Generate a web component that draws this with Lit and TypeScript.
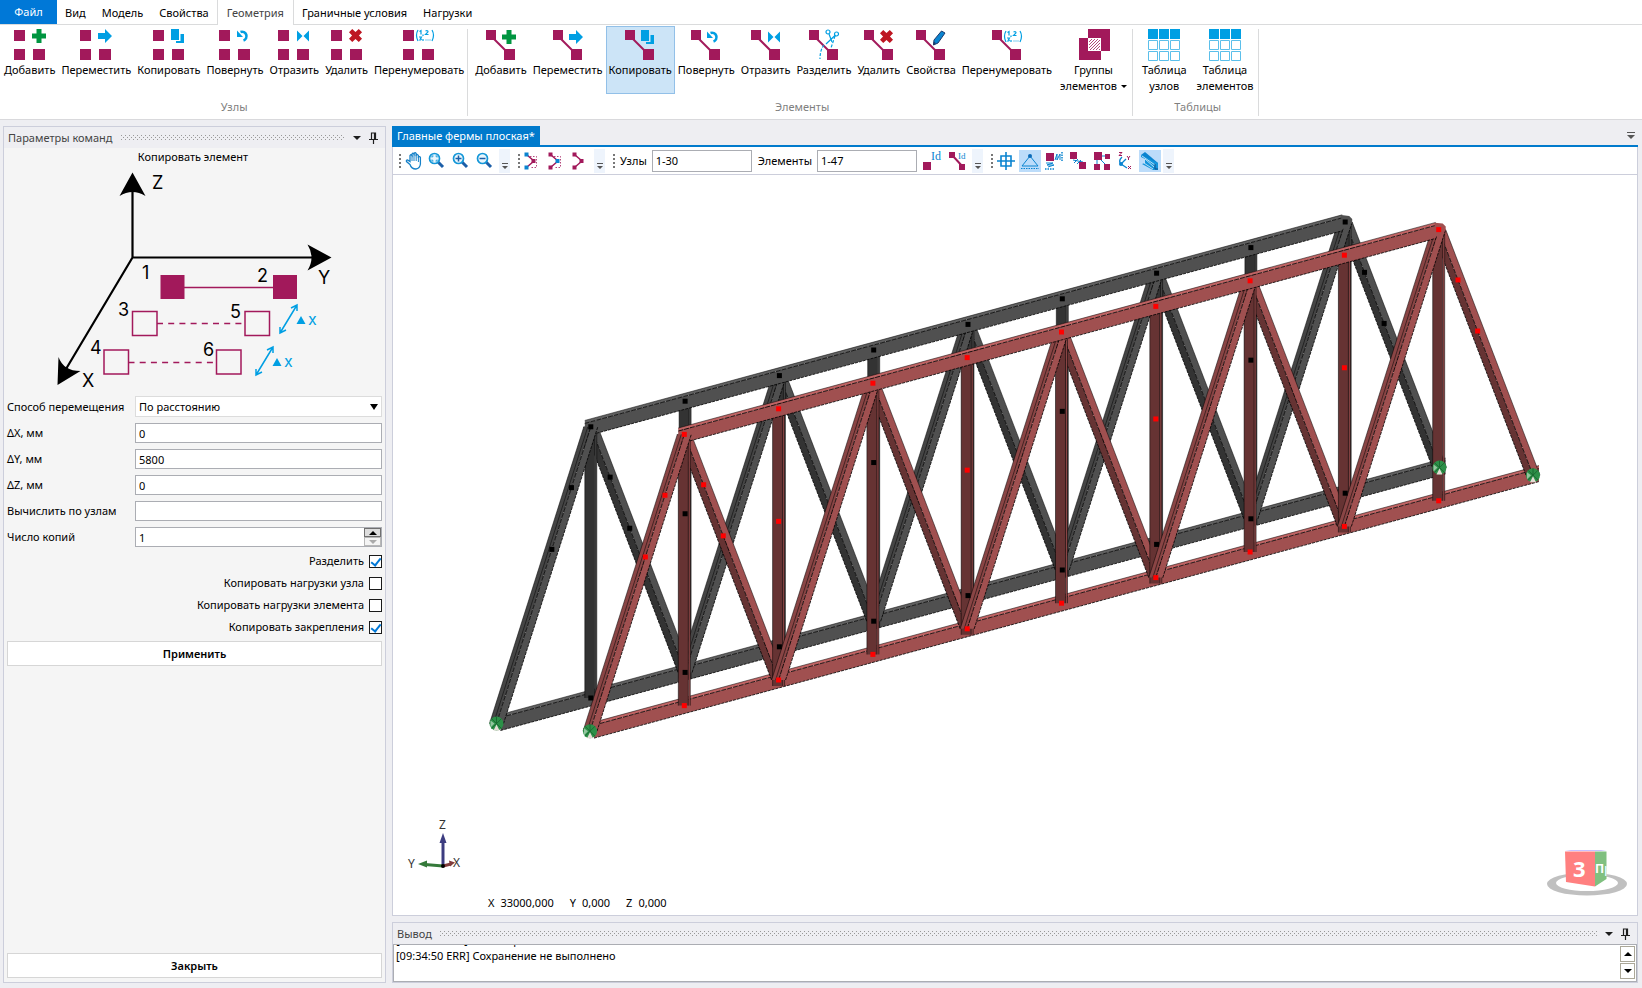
import { LitElement, html, svg, css } from "lit";
import { customElement } from "lit/decorators.js";
import { classMap } from "lit/directives/class-map.js";

const base = css`
  :host {
    font-family: "Noto Sans", "Open Sans", sans-serif;
    font-size: 11px;
    line-height: 16px;
    color: #000;
  }
  * {
    box-sizing: border-box;
  }
  button,
  input,
  select {
    font: inherit;
    color: inherit;
    margin: 0;
    border-radius: 0;
  }
  button {
    padding: 0;
    border: 0;
    background: none;
  }
  svg {
    display: block;
    flex: none;
  }
  .header {
    display: flex;
    align-items: center;
    height: 21px;
    padding: 0 7px 0 4px;
    gap: 8px;
    color: #444;
    background: #eeeef2;
  }
  .dots {
    flex: 1;
    height: 5px;
    background-image: radial-gradient(circle at 0.5px 0.5px, #999 0.6px, transparent 0.8px),
      radial-gradient(circle at 2.5px 2.5px, #999 0.6px, transparent 0.8px);
    background-size: 4px 4px;
  }
`;

const MAROON = "#a2195b";
const BLUE = "#009fe3";

/* ---------- ribbon glyphs ---------- */

const overlays: Record<string, unknown> = {
  add: svg`<path d="M4.500 0h5v4.500h4.500v5h-4.500v4.500h-5v-4.500h-4.500v-5h4.500z" fill="#009540"/>`,
  move: svg`<path d="M0 4h7v-4l7 7-7 7v-4h-7z" fill="${BLUE}"/>`,
  copy: svg`<path d="M0 0h8v11h-8zM9.500 5h3.500v9h-8v-2h4.500z" fill="${BLUE}"/>`,
  rotate: svg`<path d="M3.500 3A4.500 4.500 0 1 1 6.500 11.500" fill="none" stroke="${BLUE}" stroke-width="2.600"/><path d="M0 1.500v6.500h6z" fill="${BLUE}"/>`,
  mirror: svg`<path d="M1 1.500l5.500 5.500-5.500 5.500zM13 1.500v11l-5.500-5.500z" fill="${BLUE}"/>`,
  remove: svg`<path d="M3.500 0L7 3.300 10.500 0 14 3.500 10.700 7 14 10.500 10.500 14 7 10.700 3.500 14 0 10.500 3.300 7 0 3.500z" fill="#be1622" transform="scale(.93)"/>`,
  split: svg`<g fill="none" stroke="${BLUE}" stroke-width="1.200"><circle cx="3" cy="2" r="2"/><circle cx="11.500" cy="4" r="2"/><path d="M4 4l3 8M10 5.500L1 14"/><path d="M10 6l-4 12M-1 15q-4 5-4 14" stroke-dasharray="3 1.500"/></g>`,
  edit: svg`<path d="M9.500 1l3.500 2-7 10-4.500 2 .5-5z" fill="#0a84d0" stroke="#1d3a6b" stroke-width="1"/><path d="M1 15l.8-3.500 2.200 1.800z" fill="#1d3a6b"/>`,
  number: svg`<g fill="none" stroke="${BLUE}" stroke-width="1.200"><path d="M3 1Q0 6 3 12M17 1q3 5 0 11M4.500 2.500l1.500-1v4M8 5.500v1.500M10.500 2q2.500-1 2.500.8l-2.500 2.700h3M4 8h2.500l-1 1.500q2 1.500-1.500 1.500M8 10v2M10.500 11h1M12.500 11h1M14.500 11h1"/></g>`,
};

const nodeIcon = (kind: string) => svg`
  <g fill="${MAROON}">
    <path d="M0 1h11v11h-11zM0 20h11v11h-11zM19 20h12v11h-12z"/>
  </g>
  <g transform="translate(${kind === "number" ? 12 : 18} 0)">${overlays[kind]}</g>`;

const elementIcon = (kind: string) => svg`
  <path d="M7 8L25 26" stroke="${MAROON}" stroke-width="2"/>
  <g fill="${MAROON}"><path d="M1 1h10v10h-10zM19 20h11v11h-11z"/></g>
  <g transform="translate(${kind === "number" ? 12 : 17} 1)">${overlays[kind]}</g>`;

const groupIcon = svg`
  <path d="M10 0h22v22h-9v9h-22v-22h9z" fill="${MAROON}"/>
  <path d="M10 9h13v13h-13z" fill="#fff"/>
  <path d="M10 11l2-2M10 14l5-5M10 17l8-8M10 20l11-11M11 22l12-12M14 22l9-9M17 22l6-6M20 22l3-3" stroke="${MAROON}" stroke-width=".8"/>
  <path d="M10.500 9.500h12v12h-12z" fill="none" stroke="#fff"/>`;

const tableIcon = svg`
  <path d="M0 0h10v10h-10zM11 0h10v10h-10zM22 0h10v10h-10z" fill="${BLUE}"/>
  <path d="M.5 11.500h9v9h-9zM11.500 11.500h9v9h-9zM22.500 11.500h9v9h-9zM.5 22.500h9v9h-9zM11.500 22.500h9v9h-9zM22.500 22.500h9v9h-9z" fill="none" stroke="#5bbfea"/>`;

const ribbonGroups = [
  {
    title: "Узлы",
    items: [
      ["Добавить", nodeIcon("add")],
      ["Переместить", nodeIcon("move")],
      ["Копировать", nodeIcon("copy")],
      ["Повернуть", nodeIcon("rotate")],
      ["Отразить", nodeIcon("mirror")],
      ["Удалить", nodeIcon("remove")],
      ["Перенумеровать", nodeIcon("number")],
    ],
  },
  {
    title: "Элементы",
    items: [
      ["Добавить", elementIcon("add")],
      ["Переместить", elementIcon("move")],
      ["Копировать", elementIcon("copy"), "active"],
      ["Повернуть", elementIcon("rotate")],
      ["Отразить", elementIcon("mirror")],
      ["Разделить", elementIcon("split")],
      ["Удалить", elementIcon("remove")],
      ["Свойства", elementIcon("edit")],
      ["Перенумеровать", elementIcon("number")],
      ["Группы элементов", groupIcon, "menu"],
    ],
  },
  {
    title: "Таблицы",
    items: [
      ["Таблица узлов", tableIcon, "wrap"],
      ["Таблица элементов", tableIcon, "wrap"],
    ],
  },
] as { title: string; items: [string, unknown, string?][] }[];

@customElement("ribbon-bar")
class RibbonBar extends LitElement {
  static styles = [
    base,
    css`
      :host {
        display: block;
        background: #fff;
        border-bottom: 1px solid #d9d9dc;
      }
      .tabs {
        display: flex;
        height: 25px;
        border-bottom: 1px solid #dadbdc;
      }
      .tab {
        height: 24px;
        padding: 1px 8px 0;
        white-space: nowrap;
      }
      .file {
        width: 57px;
        color: #fff;
        background: #0078d7;
        padding: 0;
      }
      .current {
        height: 25px;
        padding: 0 9px;
        color: #444;
        background: #fff;
        border: solid #dadbdc;
        border-width: 0 1px;
      }
      .groups {
        display: flex;
        height: 94px;
        padding: 1px 0 3px;
      }
      .group {
        display: flex;
        flex-direction: column;
        position: relative;
        padding: 0 1px;
      }
      .group + .group {
        padding-left: 4px;
      }
      .group::after {
        content: "";
        position: absolute;
        right: 0;
        top: 3px;
        bottom: 0;
        width: 1px;
        background: #dadbdc;
      }
      .row {
        display: flex;
      }
      .cmd {
        display: flex;
        flex-direction: column;
        align-items: center;
        height: 68px;
        padding: 2px;
        border: 1px solid transparent;
        white-space: nowrap;
      }
      .icon {
        margin-bottom: 1px;
      }
      .active {
        background: #cce4f7;
        border-color: #92c0e8;
      }
      .menu,
      .wrap {
        padding: 2px 4px;
      }
      .line {
        display: flex;
        align-items: center;
        gap: 4px;
      }
      .caret {
        border: solid transparent;
        border-width: 3px 3px 0;
        border-top-color: #000;
      }
      .title {
        margin-top: 5px;
        text-align: center;
        color: #7f7f7f;
      }
    `,
  ];
  render() {
    const tabs = ["Вид", "Модель", "Свойства", "Геометрия", "Граничные условия", "Нагрузки"];
    return html`
      <nav class="tabs">
        <button class="tab file">Файл</button>
        ${tabs.map((t) => html`<button class=${classMap({ tab: true, current: t === "Геометрия" })}>${t}</button>`)}
      </nav>
      <div class="groups">
        ${ribbonGroups.map(
          (g) => html`<section class="group">
            <div class="row">
              ${g.items.map(([label, icon, mode]) => {
                const words = mode === "menu" || mode === "wrap" ? label.split(" ") : [label];
                return html`<button
                  class=${classMap({ cmd: true, active: mode === "active", menu: mode === "menu", wrap: mode === "wrap" })}
                >
                  <svg class="icon" width="32" height="32" viewBox="0 0 32 32">${icon}</svg>
                  ${words.map(
                    (w, i) =>
                      html`<span class="line">${w}${mode === "menu" && i === 1 ? html`<i class="caret"></i>` : ""}</span>`
                  )}
                </button>`;
              })}
            </div>
            <div class="title">${g.title}</div>
          </section>`
        )}
      </div>
    `;
  }
}

const headerTools = html`
  <svg width="8" height="4" viewBox="0 0 8 4"><path d="M0 0h8l-4 4z" fill="#1e1e1e" /></svg>
  <svg width="9" height="12" viewBox="0 0 9 12">
    <path d="M2.500 7V1h4v6M0 7.500h9M4.500 7.500V12M5.500 1v6" fill="none" stroke="#1e1e1e" stroke-width="1.200" />
  </svg>
`;

/* ---------- left panel ---------- */

@customElement("command-panel")
class CommandPanel extends LitElement {
  static styles = [
    base,
    css`
      :host {
        display: flex;
        flex-direction: column;
        background: #f5f5f5;
        border: 1px solid #ccceDB;
      }
      .body {
        flex: 1;
        display: flex;
        flex-direction: column;
        padding: 1px 3px 4px;
      }
      .name {
        text-align: center;
        padding-right: 3px;
      }
      .scheme {
        width: 100%;
        height: 231px;
      }
      .form {
        display: grid;
        grid-template-columns: 128px 1fr;
        row-gap: 6px;
        align-items: center;
      }
      .field {
        width: 100%;
        height: 20px;
        padding: 0 3px;
        border: 1px solid #abadb3;
        background: #fff;
        outline: none;
      }
      .pick {
        position: relative;
        display: flex;
      }
      .pick select {
        appearance: none;
        height: 21px;
        border-color: #dcdcdc;
      }
      .pick::after {
        content: "";
        position: absolute;
        right: 4px;
        top: 8px;
        border: solid transparent;
        border-width: 6px 4px 0;
        border-top-color: #000;
      }
      .spin {
        position: relative;
        display: flex;
      }
      .steps {
        position: absolute;
        right: 1px;
        top: 1px;
        display: grid;
        grid-template-rows: 9px 9px;
        width: 17px;
      }
      .step {
        display: grid;
        place-items: center;
        border: 1px solid #707070;
        background: #ddd;
      }
      .step.off {
        border-color: #b8b8b8;
        background: #f4f4f4;
      }
      .checks {
        display: flex;
        flex-direction: column;
        align-items: flex-end;
        gap: 6px;
        padding: 6px 0;
      }
      .check {
        display: flex;
        align-items: center;
        gap: 5px;
      }
      .box {
        appearance: none;
        position: relative;
        width: 13px;
        height: 13px;
        border: 1px solid #1a1a1a;
        background: #fff;
      }
      .box:checked::after {
        content: "";
        position: absolute;
        left: 3px;
        top: 0;
        width: 4px;
        height: 8px;
        border: solid #0078d7;
        border-width: 0 2px 2px 0;
        transform: rotate(38deg);
      }
      .wide {
        height: 25px;
        font-weight: 600;
        background: #fff;
        border: 1px solid #d6d6d6;
      }
      .space {
        flex: 1;
      }
    `,
  ];
  render() {
    const fields = [
      ["dx", "ΔX, мм", "0"],
      ["dy", "ΔY, мм", "5800"],
      ["dz", "ΔZ, мм", "0"],
      ["calc", "Вычислить по узлам", ""],
    ];
    const checks: [string, boolean][] = [
      ["Разделить", true],
      ["Копировать нагрузки узла", false],
      ["Копировать нагрузки элемента", false],
      ["Копировать закрепления", true],
    ];
    const link = (x: number, y: number) => svg`
      <g fill="none" stroke="${BLUE}" stroke-width="1.500">
        <path d="M${x} ${y}l-17 28M${x - 6} ${y + 3}l6-3 0 6M${x - 17} ${y + 22}l0 6 6-3"/>
      </g>
      <path d="M${x + 4} ${y + 11}l-4.500 8h9z" fill="${BLUE}"/>
      <text x="${x + 11}" y="${y + 20}" font-size="16" fill="${BLUE}">x</text>`;
    return html`
      <div class="header">Параметры команд<span class="dots"></span>${headerTools}</div>
      <div class="body">
        <div class="name">Копировать элемент</div>
        <svg class="scheme" viewBox="7 165 375 231" preserveAspectRatio="xMidYMid meet" font-family="Inter, sans-serif">
          <path d="M132.500 190V257.500H315M132.500 257.500L66 369" fill="none" stroke="#000" stroke-width="2.200" />
          <path d="M132.500 172.500l13 23.500q-13-8-26 0zM331.500 257.500l-24 13q8-13 0-26zM57.500 385l1-28q5 14 22 14z" />
          <g font-size="18">
            <text x="152" y="189">Z</text><text x="318" y="284">Y</text><text x="82" y="387">X</text>
            <text x="142" y="279">1</text><text x="257" y="282">2</text><text x="118" y="316">3</text>
            <text x="230" y="318">5</text><text x="90" y="354">4</text><text x="203" y="356">6</text>
          </g>
          <path d="M160.500 275h24v24h-24zM273 275h24v24h-24z" fill="${MAROON}" />
          <g fill="none" stroke="${MAROON}" stroke-width="1.500">
            <path d="M184 287.500h90M132.500 311.500h24.500v24h-24.500zM245 311.500h24.500v24h-24.500zM104 350h24.500v24h-24.500zM216.500 350h24.500v24h-24.500z" />
            <path d="M157 323.500h88M128.500 362.500h88" stroke-dasharray="6 5.200" />
          </g>
          ${link(297, 305)} ${link(273, 347)}
        </svg>
        <div class="form">
          <label for="mode">Способ перемещения</label>
          <span class="pick"><select id="mode" class="field"><option>По расстоянию</option></select></span>
          ${fields.map(
            ([id, label, value]) => html`<label for=${id}>${label}</label><input id=${id} class="field" .value=${value} />`
          )}
          <label for="count">Число копий</label>
          <span class="spin">
            <input id="count" class="field" value="1" />
            <span class="steps">
              <button class="step" aria-label="Больше">
                <svg width="8" height="4" viewBox="0 0 8 4"><path d="M0 4h8l-4-4z" /></svg>
              </button>
              <button class="step off" aria-label="Меньше">
                <svg width="8" height="4" viewBox="0 0 8 4"><path d="M0 0h8l-4 4z" fill="#aaa" /></svg>
              </button>
            </span>
          </span>
        </div>
        <div class="checks">
          ${checks.map(
            ([label, on]) => html`<label class="check">${label}<input class="box" type="checkbox" .checked=${on} /></label>`
          )}
        </div>
        <button class="wide">Применить</button>
        <div class="space"></div>
        <button class="wide">Закрыть</button>
      </div>
    `;
  }
}

/* ---------- truss drawing ---------- */

type Pt = [number, number];
interface Tone {
  light: string;
  mid: string;
  dark: string;
  top: string;
  node: string;
}

const PANEL: Pt = [94.3, -25.6];
const RISE = 271.2;
const RED: Tone = { light: "#a05050", mid: "#8a4545", dark: "#663333", top: "#c06464", node: "#ff0000" };
const GREY: Tone = { light: "#505050", mid: "#454545", dark: "#333333", top: "#606060", node: "#000000" };

const bottomAt = (o: Pt, i: number): Pt => [o[0] + PANEL[0] * i, o[1] + PANEL[1] * i];
const topAt = (o: Pt, i: number): Pt => [o[0] + PANEL[0] * i, o[1] + PANEL[1] * i - RISE];
const between = (a: Pt, b: Pt, k: number): Pt => [a[0] + (b[0] - a[0]) * k, a[1] + (b[1] - a[1]) * k];

const strip = (a: Pt, b: Pt, from: Pt, to: Pt, fill: string) => svg`
  <polygon fill=${fill} points="${a[0] + from[0]},${a[1] + from[1]} ${b[0] + from[0]},${b[1] + from[1]} ${b[0] + to[0]},${b[1] + to[1]} ${a[0] + to[0]},${a[1] + to[1]}"/>`;
const edge = (a: Pt, b: Pt, d: Pt, dash = "") => svg`
  <line x1=${a[0] + d[0]} y1=${a[1] + d[1]} x2=${b[0] + d[0]} y2=${b[1] + d[1]} stroke="#000" stroke-width="1" stroke-opacity=${dash ? 0.8 : 0.5} stroke-dasharray=${dash}/>`;
const cap = (p: Pt, d: string, fill: string) => svg`
  <path transform="translate(${p[0]} ${p[1]})" d=${d} fill=${fill}/>`;

function chord(a: Pt, b: Pt, t: Tone, before: number, after: number) {
  const slope = PANEL[1] / PANEL[0];
  const p: Pt = [a[0] - before, a[1] - before * slope];
  const q: Pt = [b[0] + after, b[1] + after * slope];
  return svg`${strip(p, q, [0, -8], [0, -5], t.top)}${strip(p, q, [0, -5], [0, 8], t.light)}
    ${edge(p, q, [0, -8])}${edge(p, q, [0, -5], "5 1")}${edge(p, q, [0, 8], "3 1")}`;
}
const rising = (a: Pt, b: Pt, t: Tone) => svg`
  ${strip(a, b, [-7, 0], [0, 0], t.mid)}${strip(a, b, [0, 0], [7, 0], t.light)}
  ${edge(a, b, [-7, 0])}${edge(a, b, [-3, 0])}${edge(a, b, [0, 0], "5 1")}${edge(a, b, [7, 0], "3 1")}`;
const falling = (a: Pt, b: Pt, t: Tone) => svg`
  ${strip(a, b, [-7, 0], [0, 0], t.dark)}${strip(a, b, [0, 0], [7, 0], t.light)}
  ${edge(a, b, [-7, 0], "3 1")}${edge(a, b, [0, 0], "5 1")}${edge(a, b, [7, 0])}`;
const post = (a: Pt, b: Pt, t: Tone) => svg`
  ${strip(a, b, [-6, 0], [4, 0], t.dark)}${strip(a, b, [4, 0], [6, 0], t.mid)}
  ${edge(a, b, [-6, 0])}${edge(a, b, [4, 0])}${edge(a, b, [6, 0])}`;

function truss(o: Pt, t: Tone) {
  const odd = [1, 3, 5, 7, 9];
  const all = [1, 2, 3, 4, 5, 6, 7, 8, 9];
  const down = ([x, y]: Pt): Pt => [x, y + 6];
  return svg`
    ${chord(bottomAt(o, 0), bottomAt(o, 10), t, -4, 6)}
    ${cap(o, "M-7 -3L7 -3L7 5.500L-3 5.500z", t.light)}
    ${odd.map((i) => falling(topAt(o, i), bottomAt(o, i + 1), t))}
    ${all.map((i) => post(topAt(o, i), i % 2 ? bottomAt(o, i) : down(bottomAt(o, i)), t))}
    ${odd.slice(1).map((i) => rising(bottomAt(o, i - 1), topAt(o, i), t))}
    ${chord(topAt(o, 1), topAt(o, 9), t, 6, -3)}
    ${cap(topAt(o, 9), "M-4 -6.900L4 -6L7 -3L7 1L0 6L-4 8z", t.light)}
    ${rising(o, topAt(o, 1), t)}`;
}

function nodes(o: Pt, t: Tone) {
  const pts: Pt[] = [];
  for (let i = 1; i < 10; i++) {
    pts.push(topAt(o, i), bottomAt(o, i));
    if (i % 2 === 0) pts.push(between(topAt(o, i), bottomAt(o, i), 0.415));
  }
  for (const k of [0.205, 0.413]) {
    pts.push(between(topAt(o, 1), bottomAt(o, 0), k));
    pts.push(between(topAt(o, 1), bottomAt(o, 2), k));
    pts.push(between(topAt(o, 9), bottomAt(o, 10), k));
  }
  return pts.map(([x, y]) => svg`<rect x=${x - 2.5} y=${y - 2.5} width="5" height="5" fill=${t.node}/>`);
}

const support = ([x, y]: Pt) => svg`
  <g transform="translate(${x} ${y})">
    <circle r="7" fill="#2c9048"/>
    <path d="M0 1L-3 7H3z" fill="#e6dcd6"/>
    <path d="M-6 -3l4 3-4 4z" fill="#d8ead8" opacity=".6"/>
    <path d="M-5 -5L5 5M5 -5L-5 5M0 -7V0" stroke="#17602c" stroke-width=".8"/>
  </g>`;

/* ---------- toolbar glyphs ---------- */

const lens = (inner: unknown) => svg`
  <g transform="translate(-1 0)">
    <path d="M10 10l5 5" stroke="#1c5fa8" stroke-width="3"/>
    <circle cx="6.500" cy="6.500" r="5" fill="#e9f6fd" stroke="#1497d8" stroke-width="1.700"/>${inner}
  </g>`;
const chain = (a: string, b: string) => svg`
  <path d="M3 3l7 6-7 6" fill="none" stroke="${MAROON}" stroke-width="1.500"/>
  <path d="M.5.5h4v4h-4zM.5 13.500h4v4h-4z" fill="${a}"/><path d="M7.500 7h4v4h-4z" fill="${b}"/>`;
const frame = svg`<path d="M6 4.500h6.500v11h-6.500" fill="none" stroke="${MAROON}" stroke-width=".8" stroke-dasharray="1.500 1.500"/>`;

const glyphs: Record<string, unknown> = {
  hand: svg`<path d="M5 12.500L1.500 9.500q-.5-1.500 1-1.500l2.500 1.500V3.500q1-1.500 2 0V2q1-1.500 2 0V1.500q1.200-1.500 2.200 0V3q1.300-1.200 2.200.5V5q1.200-.8 2 .5V12q-.5 4.500-4.500 5-4.500 0-5.900-4.500z" fill="#fff" stroke="#1681c8" stroke-width="1.300"/><path d="M7 3v6M9 2v7M11.200 2.500V9M13.400 4.500V10" stroke="#1681c8"/>`,
  fit: lens(svg`<path d="M4 5.500V4h1.500M7.500 4H9v1.500M9 7.500V9H7.500M5.500 9H4V7.500" fill="none" stroke="#1497d8"/>`),
  plus: lens(svg`<path d="M3.500 6.500h6M6.500 3.500v6" stroke="#1c5fa8" stroke-width="1.500"/>`),
  minus: lens(svg`<path d="M3.500 6.500h6" stroke="#1c5fa8" stroke-width="1.500"/>`),
  sel1: svg`${frame}${chain("#0a84d0", MAROON)}`,
  sel2: svg`${frame}${chain(MAROON, "#0a84d0")}`,
  sel3: chain(MAROON, MAROON),
  id1: svg`<path d="M0 10h8v8h-8z" fill="${MAROON}"/><text x="8" y="8" font-size="12" font-family="Liberation Serif, serif" fill="#0a84d0">Id</text>`,
  id2: svg`<path d="M3 3l11 12" stroke="${MAROON}" stroke-width="2"/><path d="M0 0h6v6h-6zM10 12h6v6h-6z" fill="${MAROON}"/><text x="9" y="7" font-size="9" font-family="Liberation Serif, serif" fill="#0a84d0">Id</text>`,
  target: svg`<path d="M9 0v18M0 9h18M4 4h10v10h-10z" fill="none" stroke="#0a84d0" stroke-width="1.600"/>`,
  hinge: svg`<path d="M9 4l8 10h-16z" fill="none" stroke="#0a84d0"/><path d="M0 16.500h18" stroke="#0a84d0" stroke-dasharray="1.500 1"/><circle cx="9" cy="4" r="2" fill="#0a6ab8"/>`,
  spring: svg`<path d="M1 1h8v8h-8z" fill="${MAROON}"/><path d="M10 8l2-6v6l3-6v6" fill="none" stroke="#0a84d0"/><path d="M17 0v10" stroke="#0a84d0" stroke-dasharray="1.500 1" stroke-width="1.500"/><path d="M1 11h7l-6 2h7l-6 2" fill="none" stroke="#0a84d0"/><path d="M0 17h10" stroke="#0a84d0" stroke-dasharray="1.500 1" stroke-width="1.500"/>`,
  join: svg`<path d="M4 8l10 2M5 11l4-4M8 12l4-4" stroke="#0a84d0"/><path d="M1 0h7v7h-7zM10 10h7v7h-7z" fill="${MAROON}"/>`,
  body: svg`<path d="M4 4h10M4 4v10M4 4l10 10" stroke="#0a84d0"/><path d="M1 0h8v8h-8zM12 2h5v5h-5zM1 12h6v6h-6zM11 12h6v6h-6z" fill="${MAROON}"/>`,
  axes: svg`<path d="M5 5Q1 9 4 12l6 4M4 12l5-5" fill="none" stroke="#0a84d0" stroke-width="1.300"/><circle cx="4" cy="12" r="2" fill="#0a84d0"/><path d="M2 .5h3l-3 3h3M10 4l1.500 2 1.500-2M11.500 6v2M11 14l3 3M14 14l-3 3" fill="none" stroke="${MAROON}"/>`,
  beam: svg`<path d="M0 3l4-3 13 11-4 1z" fill="#0a84d0"/><path d="M0 3v2l4 2v4l-3 1 11 6h5v-7z" fill="#1594dc"/><path d="M1 4l13 9M4 7l9 8M3 11l9 6" stroke="#fff" stroke-width=".7"/><path d="M14 12v5h3" fill="none" stroke="#0f4f8a"/>`,
};

@customElement("model-view")
class ModelView extends LitElement {
  static styles = [
    base,
    css`
      :host {
        display: flex;
        flex-direction: column;
        min-height: 0;
      }
      .strip {
        display: flex;
        align-items: center;
        justify-content: space-between;
        border-bottom: 2px solid #007acc;
        padding-right: 3px;
      }
      .doc {
        height: 19px;
        padding: 0 5px;
        color: #fff;
        background: #007acc;
      }
      .bar {
        display: flex;
        align-items: center;
        height: 28px;
        background: #fff;
        border: solid #ccceDB;
        border-width: 0 1px 1px;
        padding-left: 5px;
      }
      .grip {
        width: 2px;
        height: 14px;
        margin: 0 2px 0 1px;
        background: repeating-linear-gradient(#777 0 2px, transparent 2px 4px);
      }
      .tool {
        display: grid;
        place-items: center;
        width: 22px;
        height: 22px;
        margin-right: 2px;
      }
      .roomy {
        width: 24px;
      }
      .glyph {
        overflow: visible;
      }
      .on {
        background: #bcdcfa;
      }
      .more {
        display: flex;
        align-items: flex-end;
        justify-content: center;
        width: 11px;
        height: 24px;
        padding-bottom: 3px;
        margin-right: 7px;
        background: #eef4fc;
      }
      .label {
        margin: 0 5px 0 3px;
      }
      .value {
        width: 100px;
        height: 22px;
        margin-right: 3px;
        padding: 0 3px;
        border: 1px solid #abadb3;
        background: #fff;
      }
      .view {
        position: relative;
        flex: 1;
        min-height: 0;
        background: #fff;
        border: 1px solid #ccceDB;
        border-top: 0;
      }
      .model {
        width: 100%;
        height: 100%;
      }
      .triad {
        position: absolute;
        left: 13px;
        bottom: 39px;
      }
      .coords {
        position: absolute;
        left: 95px;
        bottom: 4px;
        display: flex;
        gap: 16px;
      }
      .pair {
        display: flex;
        gap: 6px;
      }
      .cube {
        position: absolute;
        right: 9px;
        bottom: 18px;
      }
    `,
  ];
  tool(name: string, title: string, on = false) {
    return html`<button
      class=${classMap({ tool: true, on, roomy: name.startsWith("id") })}
      title=${title}
      aria-label=${title}
    >
      <svg class="glyph" width="18" height="18" viewBox="0 0 18 18">${glyphs[name]}</svg>
    </button>`;
  }
  render() {
    const near: Pt = [590, 731.2];
    const far: Pt = [496.5, 723.6];
    const more = html`<button class="more" aria-label="Ещё">
      <svg width="6" height="7" viewBox="0 0 6 7"><path d="M0 0h6v1h-6zM0 3h6l-3 3z" fill="#555" /></svg>
    </button>`;
    return html`
      <div class="strip">
        <button class="doc">Главные фермы плоская*</button>
        <svg width="8" height="7" viewBox="0 0 8 7"><path d="M0 0h8v1h-8zM0 3h8l-4 4z" fill="#555" /></svg>
      </div>
      <div class="bar">
        <i class="grip"></i>
        ${this.tool("hand", "Сдвиг")}${this.tool("fit", "Вписать")}${this.tool("plus", "Увеличить")}${this.tool("minus", "Уменьшить")}
        ${more}<i class="grip"></i>
        ${this.tool("sel1", "Выбор узлов")}${this.tool("sel2", "Выбор элементов")}${this.tool("sel3", "Выбор")} ${more}
        <i class="grip"></i>
        <label class="label" for="nodes">Узлы</label><input id="nodes" class="value" value="1-30" />
        <label class="label" for="elems">Элементы</label><input id="elems" class="value" value="1-47" />
        ${this.tool("id1", "Номера узлов")}${this.tool("id2", "Номера элементов")} ${more}
        <i class="grip"></i>
        ${this.tool("target", "Узлы")}${this.tool("hinge", "Закрепления", true)}${this.tool("spring", "Пружины")}${this.tool("join", "Связи")}${this.tool("body", "Жёсткие тела")}${this.tool("axes", "Оси")}${this.tool("beam", "Сечения", true)}
        ${more}
      </div>
      <div class="view">
        <svg class="model" viewBox="393 175 1244 740" preserveAspectRatio="xMidYMid meet">
          ${truss(far, GREY)} ${truss(near, RED)} ${nodes(far, GREY)} ${nodes(near, RED)} ${support(far)}
          ${support(bottomAt(far, 10))} ${support(near)} ${support(bottomAt(near, 10))}
        </svg>
        <svg class="triad" width="56" height="64" viewBox="406 812 56 64" font-size="12" fill="#333">
          <path d="M443 866V840" stroke="#3c3c80" stroke-width="3" />
          <path d="M443 833l3.500 10h-7z" fill="#3c3c80" />
          <path d="M443 866l-18-1.500" stroke="#357a3a" stroke-width="3" />
          <path d="M418 864l9-3.500v7z" fill="#357a3a" />
          <path d="M443 866l8-2" stroke="#803c3c" stroke-width="3" />
          <path d="M455 862.500l-6-2 1 6z" fill="#803c3c" />
          <circle cx="443" cy="866" r="2" fill="#000" />
          <text x="439" y="829">Z</text><text x="408" y="868">Y</text><text x="453" y="867">X</text>
        </svg>
        <div class="coords">
          <span class="pair"><span>X</span><span>33000,000</span></span>
          <span class="pair"><span>Y</span><span>0,000</span></span>
          <span class="pair"><span>Z</span><span>0,000</span></span>
        </div>
        <svg class="cube" width="82" height="48" viewBox="1546 849 82 48">
          <defs><clipPath id="side"><path d="M1595 851h11.500v28l-11.500 7.500z" /></clipPath></defs>
          <path
            d="M1547 884a40 11.500 0 0 1 80 0a40 11.500 0 0 1-80 0zM1556 883a31 8 0 0 0 62 0a31 8 0 0 0-62 0z"
            fill="#c0c0c0"
            fill-rule="evenodd"
          />
          <path d="M1565 851l6-1h30l5.500 1z" fill="#c8c0ff" />
          <path d="M1565 851.500h30v35l-29-4.500z" fill="#ff8080" />
          <path d="M1595 851.500h11.500v27.500l-11.500 7.500z" fill="#80c080" />
          <g font-weight="700" fill="#fff">
            <text x="1573" y="877" font-size="22">3</text>
            <text x="1595" y="873" font-size="12" clip-path="url(#side)">Пр</text>
          </g>
        </svg>
      </div>
    `;
  }
}

@customElement("output-panel")
class OutputPanel extends LitElement {
  static styles = [
    base,
    css`
      :host {
        display: block;
        border: 1px solid #ccceDB;
      }
      .log {
        display: flex;
        justify-content: space-between;
        height: 38px;
        overflow: hidden;
        background: #fff;
        border: 1px solid #abadb3;
        padding: 0 1px 1px 2px;
      }
      .lines {
        margin-top: -13px;
      }
      .scroll {
        display: grid;
        grid-template-rows: 16px 16px;
        gap: 1px;
        padding-top: 1px;
      }
      .arrow {
        display: grid;
        place-items: center;
        width: 15px;
        border: 1px solid #aca899;
        background: #fff;
      }
    `,
  ];
  render() {
    return html`
      <div class="header">Вывод<span class="dots"></span>${headerTools}</div>
      <div class="log">
        <div class="lines">
          <div>[09:34:50 INF] Начало работы</div>
          <div>[09:34:50 ERR] Сохранение не выполнено</div>
        </div>
        <div class="scroll">
          <button class="arrow" aria-label="Вверх"><svg width="8" height="4" viewBox="0 0 8 4"><path d="M0 4h8l-4-4z" /></svg></button>
          <button class="arrow" aria-label="Вниз"><svg width="8" height="4" viewBox="0 0 8 4"><path d="M0 0h8l-4 4z" /></svg></button>
        </div>
      </div>
    `;
  }
}

@customElement("app-root")
class AppRoot extends LitElement {
  static styles = [
    base,
    css`
      :host {
        display: flex;
        flex-direction: column;
        height: 100vh;
        background: #eeeef2;
      }
      .work {
        flex: 1;
        min-height: 0;
        display: grid;
        grid-template-columns: 383px minmax(0, 1fr);
        gap: 6px;
        padding: 6px 4px 5px 3px;
      }
      .main {
        display: flex;
        flex-direction: column;
        gap: 6px;
        min-height: 0;
      }
      .grow {
        flex: 1;
      }
    `,
  ];
  render() {
    return html`
      <ribbon-bar></ribbon-bar>
      <div class="work">
        <command-panel></command-panel>
        <div class="main">
          <model-view class="grow"></model-view>
          <output-panel></output-panel>
        </div>
      </div>
    `;
  }
}
